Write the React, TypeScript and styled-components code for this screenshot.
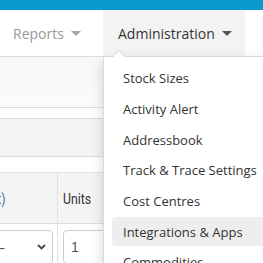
import React from 'react';
import styled, { createGlobalStyle } from 'styled-components';

const GlobalStyle = createGlobalStyle`
  html, body {
    margin: 0;
    padding: 0;
    background: #ffffff;
    overflow: hidden;
  }
  body {
    font-family: 'Open Sans', 'Noto Sans', sans-serif;
    color: #333333;
  }
`;

const Page = styled.div`
  width: 263px;
  height: 263px;
  overflow: hidden;
  display: flex;
  flex-direction: column;
`;

const TopBar = styled.div`
  height: 10px;
  flex-shrink: 0;
  background: #0a9acd;
`;

const NavBar = styled.div`
  position: relative;
  height: 47px;
  flex-shrink: 0;
  display: flex;
  align-items: stretch;
  border-bottom: 1px solid #dddddd;
  box-sizing: border-box;
`;

const NavItem = styled.div<{ $active?: boolean; $width: number; $padLeft: number }>`
  width: ${(p) => p.$width}px;
  box-sizing: border-box;
  padding-left: ${(p) => p.$padLeft}px;
  display: flex;
  align-items: center;
  gap: 7px;
  font-size: 14px;
  color: ${(p) => (p.$active ? '#333333' : '#999999')};
  background: ${(p) => (p.$active ? '#f3f3f3' : 'transparent')};
  white-space: nowrap;
`;

const Caret = styled.span<{ $color: string }>`
  width: 0;
  height: 0;
  border-left: 5px solid transparent;
  border-right: 5px solid transparent;
  border-top: 5px solid ${(p) => p.$color};
  margin-top: 1px;
`;

const Menu = styled.div`
  position: absolute;
  left: 103px;
  top: 46px;
  width: 200px;
  padding-top: 7px;
  display: flex;
  flex-direction: column;
  gap: 2px;
  background: #ffffff;
  border: 1px solid rgba(0, 0, 0, 0.15);
  box-shadow: 0 6px 12px rgba(0, 0, 0, 0.175);
  z-index: 10;

  &::before,
  &::after {
    content: '';
    position: absolute;
    width: 0;
    height: 0;
    border-left: 7px solid transparent;
    border-right: 7px solid transparent;
  }
  &::before {
    left: 8px;
    top: -7px;
    border-bottom: 7px solid #cfcfcf;
  }
  &::after {
    left: 9px;
    top: -6px;
    border-left-width: 6px;
    border-right-width: 6px;
    border-bottom: 6px solid #ffffff;
  }
`;

const MenuItem = styled.div<{ $hover?: boolean }>`
  margin: 0 8px;
  height: 28.67px;
  flex-shrink: 0;
  padding-left: 11px;
  display: flex;
  align-items: center;
  font-size: 13px;
  color: #333333;
  white-space: nowrap;
  border-radius: 4px;
  background: ${(p) => (p.$hover ? '#eeeeee' : 'transparent')};
`;

const Content = styled.div`
  display: flex;
  flex-direction: column;
`;

const PanelHead = styled.div`
  height: 50px;
  background: linear-gradient(#f7f7f7, #fbfbfb);
  border-bottom: 1px solid #dddddd;
`;

const Strip = styled.div<{ $h: number }>`
  height: ${(p) => p.$h}px;
  background: #ffffff;
  border-bottom: 1px solid #dddddd;
`;

const Toolbar = styled.div`
  height: 37px;
  background: #f4f4f4;
  border-bottom: 1px solid #dddddd;
`;

const Spacer = styled.div`
  height: 15px;
`;

const Row = styled.div<{ $head?: boolean }>`
  display: grid;
  grid-template-columns: 58px 1fr;
  height: ${(p) => (p.$head ? 50 : 40)}px;
  background: ${(p) => (p.$head ? '#f4f4f4' : '#ffffff')};
  border-bottom: ${(p) => (p.$head ? '1px solid #dddddd' : 'none')};
  border-top: ${(p) => (p.$head ? '1px solid #e2e2e2' : 'none')};
`;

const Cell = styled.div<{ $end?: boolean }>`
  display: flex;
  align-items: center;
  justify-content: ${(p) => (p.$end ? 'flex-end' : 'flex-start')};
  overflow: hidden;
  white-space: nowrap;
  border-right: 1px solid #e2e2e2;
  padding-left: ${(p) => (p.$end ? 0 : 5)}px;

  &:last-child {
    border-right: none;
  }
`;

const HeadLink = styled.span`
  display: inline-block;
  font-family: 'Roboto', 'Liberation Sans', sans-serif;
  font-size: 15px;
  color: #337ab7;
  margin-right: 51px;
  transform: scaleX(0.82);
  transform-origin: right center;
  margin-top: 2px;
`;

const HeadText = styled.span`
  display: inline-block;
  font-family: 'Roboto', 'Liberation Sans', sans-serif;
  font-size: 15px;
  color: #333333;
  transform: scaleX(0.82);
  transform-origin: left center;
  margin-top: 2px;
`;

const Select = styled.div`
  width: 90px;
  flex-shrink: 0;
  height: 34px;
  margin-right: 4px;
  align-self: flex-end;
  box-sizing: border-box;
  border: 1px solid #cccccc;
  border-radius: 4px;
  display: flex;
  align-items: center;
  justify-content: space-between;
  padding: 0 6px 0 34px;
  font-size: 14px;
  color: #555555;
`;

const Input = styled.div`
  width: 60px;
  height: 34px;
  align-self: flex-end;
  box-sizing: border-box;
  border: 1px solid #cccccc;
  border-radius: 4px;
  display: flex;
  align-items: center;
  padding-left: 7px;
  font-family: 'Liberation Sans', sans-serif;
  font-size: 14px;
  color: #555555;
`;

const items = [
  'Stock Sizes',
  'Activity Alert',
  'Addressbook',
  'Track & Trace Settings',
  'Cost Centres',
  'Integrations & Apps',
  'Commodities',
];

const Chevron = () => (
  <svg width="9" height="6" viewBox="0 0 9 6">
    <path d="M1 1l3.5 3.5L8 1" fill="none" stroke="#444" strokeWidth="1.8" />
  </svg>
);

export default function App() {
  return (
    <Page>
      <GlobalStyle />
      <TopBar />
      <NavBar>
        <NavItem $width={103} $padLeft={13}>
          Reports
          <Caret $color="#a6a6a6" />
        </NavItem>
        <NavItem $active $width={142} $padLeft={15}>
          Administration
          <Caret $color="#555555" />
        </NavItem>
        <Menu>
          {items.map((t, i) => (
            <MenuItem key={t} $hover={i === 5}>
              {t}
            </MenuItem>
          ))}
        </Menu>
      </NavBar>
      <Content>
        <PanelHead />
        <Strip $h={10} />
        <Toolbar />
        <Spacer />
        <Row $head>
          <Cell $end>
            <HeadLink>Weight (kg/unit)</HeadLink>
          </Cell>
          <Cell>
            <HeadText>Units</HeadText>
          </Cell>
        </Row>
        <Row>
          <Cell $end>
            <Select>
              <span>–</span>
              <Chevron />
            </Select>
          </Cell>
          <Cell>
            <Input>1</Input>
          </Cell>
        </Row>
      </Content>
    </Page>
  );
}
